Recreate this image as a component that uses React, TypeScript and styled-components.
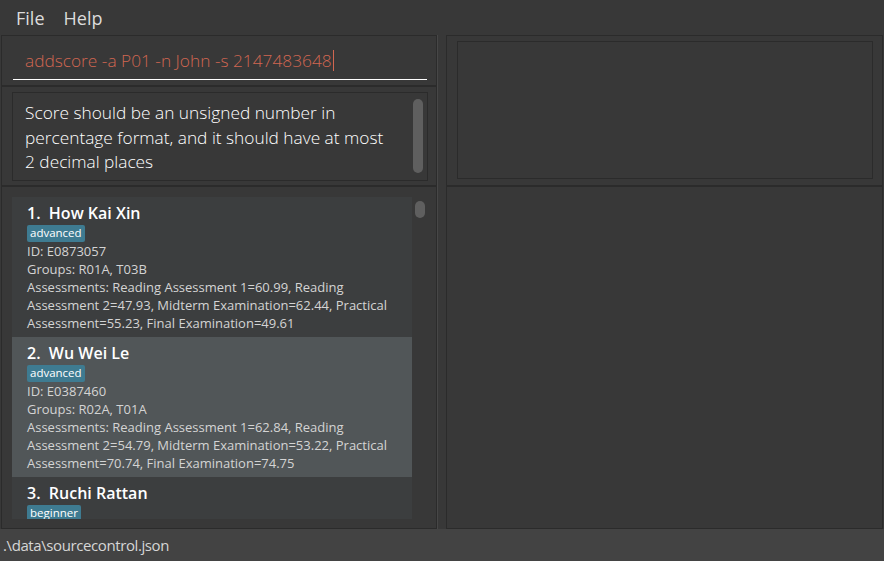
import styled, { createGlobalStyle } from 'styled-components';

const GlobalStyle = createGlobalStyle`
  html, body {
    margin: 0;
    padding: 0;
    background: #383838;
  }
  * {
    box-sizing: border-box;
  }
`;

const Window = styled.div`
  width: 884px;
  height: 561px;
  display: flex;
  flex-direction: column;
  background: #383838;
  font-family: 'Open Sans', 'Liberation Sans', sans-serif;
  overflow: hidden;
`;

const MenuBar = styled.div`
  height: 35px;
  display: flex;
  align-items: center;
  padding-left: 16px;
  gap: 19px;
`;

const MenuItem = styled.span`
  font-size: 18px;
  color: #dcdcdc;
`;

const Main = styled.div`
  flex: 1;
  display: flex;
  padding-left: 1px;
  min-height: 0;
`;

const Column = styled.div`
  width: ${(p: { $width: number }) => p.$width}px;
  display: flex;
  flex-direction: column;
`;

const Pane = styled.div`
  border: 1px solid #2b2b2b;
  background: #383838;
  height: ${(p: { $height?: number }) => (p.$height ? `${p.$height}px` : 'auto')};
  flex: ${(p: { $height?: number }) => (p.$height ? 'none' : '1')};
`;

const CommandPane = styled(Pane)`
  padding: 5px 9px 0 11px;
`;

const CommandField = styled.div`
  height: 39px;
  border-bottom: 1px solid #ffffff;
  display: flex;
  align-items: center;
  padding-left: 12px;
  font-size: 17.3px;
  font-weight: 300;
  color: #d06651;
`;

const Caret = styled.span`
  display: inline-block;
  width: 1px;
  height: 21px;
  background: #d06651;
  margin-left: 1px;
`;

const ResultPane = styled(Pane)`
  padding: 5px 8px 4px 10px;
`;

const ResultBox = styled.div`
  position: relative;
  height: 89px;
  border: 1px solid #2b2b2b;
  padding: 8px 30px 0 12px;
`;

const ResultText = styled.div`
  font-size: 17.3px;
  font-weight: 300;
  line-height: 24.5px;
  color: #ffffff;
`;

// scrollbar thumbs sit over the content they scroll
const ScrollThumb = styled.div`
  position: absolute;
  border-radius: 5px;
  background: #5f5f5f;
  width: 10px;
  right: ${(p: { $right: number; $top: number; $height: number }) => p.$right}px;
  top: ${(p) => p.$top}px;
  height: ${(p) => p.$height}px;
`;

const ListPane = styled(Pane)`
  padding: 10px 8px 9px 10px;
`;

const ListView = styled.div`
  position: relative;
  height: 322px;
  display: flex;
  overflow: hidden;
`;

const Cards = styled.div`
  width: 400px;
  display: flex;
  flex-direction: column;
`;

const Card = styled.div`
  flex: none;
  padding: 5px 15px 5px;
  background: ${(p: { $odd: boolean }) => (p.$odd ? '#515658' : '#3c3e3f')};
`;

const Name = styled.div`
  font-size: 16px;
  font-weight: 600;
  line-height: 22px;
  color: #ffffff;
  white-space: pre;
`;

const Tags = styled.div`
  display: flex;
  gap: 4px;
  margin-top: 1px;
  height: 17px;
`;

const Tag = styled.span`
  font-size: 11.5px;
  line-height: 16px;
  padding: 0 3px;
  border-radius: 2px;
  background: #3e7b91;
  color: #ffffff;
`;

const Detail = styled.div`
  font-size: 13px;
  line-height: 18px;
  color: #d4d4d4;
`;

const Divider = styled.div`
  width: 9px;
  border-left: 1px solid #474747;
`;

const DetailPane = styled(Pane)`
  padding: 5px 9px 6px 10px;
`;

const DetailBox = styled.div`
  height: 138px;
  border: 1px solid #2b2b2b;
`;

const StatusBar = styled.div`
  height: 32px;
  display: flex;
  align-items: center;
  padding-left: 3px;
  background: #434343;
  font-size: 15px;
  letter-spacing: -0.4px;
  color: #d6d6d6;
`;

type Student = {
  name: string;
  tag: string;
  id: string;
  groups: string;
  assessments: string;
};

const students: Student[] = [
  {
    name: 'How Kai Xin',
    tag: 'advanced',
    id: 'E0873057',
    groups: 'R01A, T03B',
    assessments:
      'Reading Assessment 1=60.99, Reading Assessment 2=47.93, Midterm Examination=62.44, Practical Assessment=55.23, Final Examination=49.61',
  },
  {
    name: 'Wu Wei Le',
    tag: 'advanced',
    id: 'E0387460',
    groups: 'R02A, T01A',
    assessments:
      'Reading Assessment 1=62.84, Reading Assessment 2=54.79, Midterm Examination=53.22, Practical Assessment=70.74, Final Examination=74.75',
  },
  {
    name: 'Ruchi Rattan',
    tag: 'beginner',
    id: 'E0412398',
    groups: 'R03B, T02A',
    assessments:
      'Reading Assessment 1=71.20, Reading Assessment 2=66.05, Midterm Examination=58.90, Practical Assessment=80.12, Final Examination=69.33',
  },
];

export default function App() {
  return (
    <Window>
      <GlobalStyle />
      <MenuBar>
        <MenuItem>File</MenuItem>
        <MenuItem>Help</MenuItem>
      </MenuBar>
      <Main>
        <Column $width={436}>
          <CommandPane $height={51}>
            <CommandField>
              addscore -a P01 -n John -s 2147483648
              <Caret />
            </CommandField>
          </CommandPane>
          <ResultPane $height={100}>
            <ResultBox>
              <ResultText>
                Score should be an unsigned number in percentage format, and it should have at most
                2 decimal places
              </ResultText>
              <ScrollThumb $right={4} $top={6} $height={74} />
            </ResultBox>
          </ResultPane>
          <ListPane>
            <ListView>
              <Cards>
                {students.map((s, i) => (
                  <Card key={s.id} $odd={i % 2 === 1}>
                    <Name>{`${i + 1}.  ${s.name}`}</Name>
                    <Tags>
                      <Tag>{s.tag}</Tag>
                    </Tags>
                    <Detail>ID: {s.id}</Detail>
                    <Detail>Groups: {s.groups}</Detail>
                    <Detail>Assessments: {s.assessments}</Detail>
                  </Card>
                ))}
              </Cards>
              <ScrollThumb $right={3} $top={4} $height={17} />
            </ListView>
          </ListPane>
        </Column>
        <Divider />
        <Column $width={437}>
          <DetailPane $height={151}>
            <DetailBox />
          </DetailPane>
          <Pane />
        </Column>
      </Main>
      <StatusBar>.\data\sourcecontrol.json</StatusBar>
    </Window>
  );
}
